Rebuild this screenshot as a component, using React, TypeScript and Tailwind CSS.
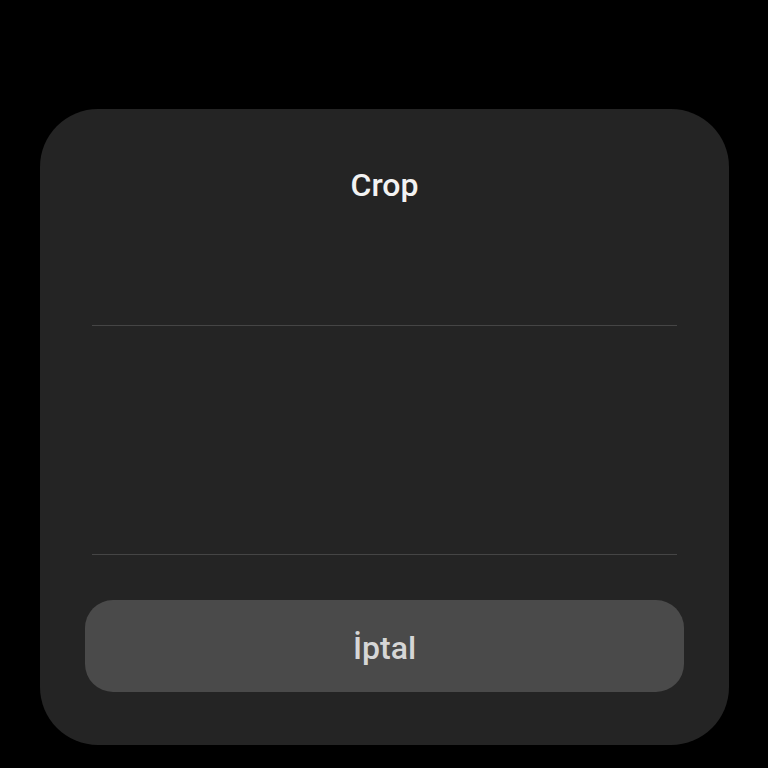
import React from 'react';

const App: React.FC = () => {
  return (
    <div className="w-[768px] h-[768px] bg-black overflow-hidden" style={{ fontFamily: 'Roboto, "Noto Sans", sans-serif' }}>
      <div className="ml-[40px] mt-[109px] w-[689px] h-[636px] rounded-[58px] bg-[#242424] flex flex-col pt-[56px]">
        <div className="h-[40px] flex items-center justify-center">
          <span className="text-[32px] leading-[40px] font-medium text-[#f2f2f2]">Crop</span>
        </div>
        <div className="mx-[52px] mt-[120px] h-px bg-[#454545]" />
        <div className="h-[228px]" />
        <div className="mx-[52px] h-px bg-[#454545]" />
        <div className="px-[45px] mt-[45px]">
          <button className="w-full h-[92px] rounded-[28px] bg-[#4a4a4a] flex items-center justify-center pt-[4px]">
            <span className="text-[32px] font-medium text-[#d6d6d6]">İptal</span>
          </button>
        </div>
      </div>
    </div>
  );
};

export default App;
